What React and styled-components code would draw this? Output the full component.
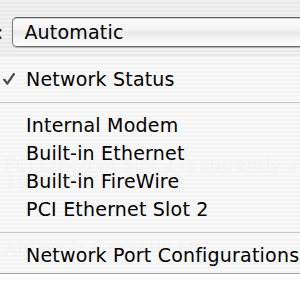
import React from "react";
import styled, { createGlobalStyle } from "styled-components";

const Global = createGlobalStyle`
  html, body { margin: 0; padding: 0; }
  body {
    width: 300px; height: 300px; overflow: hidden;
    background: #ffffff;
    font-family: "DejaVu Sans", "Lucida Grande", Verdana, sans-serif;
  }
`;

const Window = styled.div`
  position: relative;
  width: 300px;
  height: 300px;
  overflow: hidden;
`;

const Striped = styled.div`
  height: 274px;
  background: repeating-linear-gradient(
    to bottom,
    #f1f1f1 0px, #f1f1f1 2px,
    #e9e9e9 2px, #e9e9e9 4px
  );
  display: flex;
  flex-direction: column;
`;

const LocationRow = styled.div`
  display: flex;
  align-items: center;
  gap: 9px;
  padding-top: 17px;
  margin-left: -3px;
`;

const Label = styled.span`
  font-size: 19px;
  color: #222;
  line-height: 30px;
`;

const PopupButton = styled.div`
  flex: none;
  width: 320px;
  height: 30px;
  box-sizing: border-box;
  border: 1px solid #7a7a7a;
  border-top-color: #5e5e5e;
  border-bottom-color: #6a6a6a;
  border-radius: 5px;
  background: linear-gradient(
    to bottom,
    #fdfdfd 0%, #f4f4f4 40%, #e8e8e8 52%, #f3f3f3 70%, #ffffff 100%
  );
  box-shadow: 0 1px 1px rgba(0,0,0,0.25), inset 0 1px 0 #cfcfcf;
  display: flex;
  align-items: center;
  padding-left: 11px;
  font-size: 19px;
  letter-spacing: 0.2px;
  color: #000;
`;

const Info = styled.div`
  padding: 109px 0 0 5px;
  display: flex;
  flex-direction: column;
  font-size: 18px;
  line-height: 17px;
  color: #cdcdcd;
  white-space: nowrap;
`;

const InfoLine = styled.div`
  margin-top: ${p => p.$gap || 0}px;
`;

const Menu = styled.div`
  position: absolute;
  left: 0;
  top: 57px;
  width: 300px;
  box-sizing: border-box;
  padding: 8px 0 4px;
  background: repeating-linear-gradient(
    to bottom,
    rgba(250,250,250,0.88) 0px, rgba(250,250,250,0.88) 2px,
    rgba(245,245,245,0.88) 2px, rgba(245,245,245,0.88) 4px
  );
  border-bottom: 1px solid #a3a3a3;
  display: flex;
  flex-direction: column;
`;

const Item = styled.div`
  height: 28px;
  line-height: 28px;
  display: flex;
  align-items: center;
  font-size: 19px;
  letter-spacing: 0.2px;
  color: #000;
  white-space: nowrap;
`;

const Mark = styled.span`
  width: 26px;
  flex: none;
  display: flex;
  align-items: center;
  justify-content: flex-start;
  padding-left: 3px;
  box-sizing: border-box;
`;

const Separator = styled.div`
  height: 18px;
  display: flex;
  align-items: center;
  &::after {
    content: "";
    display: block;
    width: 100%;
    height: 1px;
    background: #c8c8c8;
  }
`;

const Check = () => (
  <svg width="12" height="12" viewBox="0 0 12 12">
    <path d="M1.2 6.6 L4.3 10.6 L10.8 1.2" fill="none" stroke="#4a4a4a" strokeWidth="2.3" strokeLinejoin="round" strokeLinecap="round" />
  </svg>
);

const items = [
  { label: "Network Status", checked: true },
  "sep",
  { label: "Internal Modem" },
  { label: "Built-in Ethernet" },
  { label: "Built-in FireWire" },
  { label: "PCI Ethernet Slot 2" },
  "sep",
  { label: "Network Port Configurations" },
];

export default function App() {
  return (
    <>
      <Global />
      <Window>
        <Striped>
          <LocationRow>
            <Label>:</Label>
            <PopupButton>Automatic</PopupButton>
          </LocationRow>
          <Info>
            <InfoLine>PCI Ethernet Slot 2 is currently active and</InfoLine>
            <InfoLine>192.168.1.2</InfoLine>
            <InfoLine $gap={50}>AirPort is currently off</InfoLine>
          </Info>
        </Striped>
        <Menu>
          {items.map((it, i) =>
            it === "sep" ? (
              <Separator key={i} />
            ) : (
              <Item key={i}>
                <Mark>{it.checked ? <Check /> : null}</Mark>
                {it.label}
              </Item>
            )
          )}
        </Menu>
      </Window>
    </>
  );
}
